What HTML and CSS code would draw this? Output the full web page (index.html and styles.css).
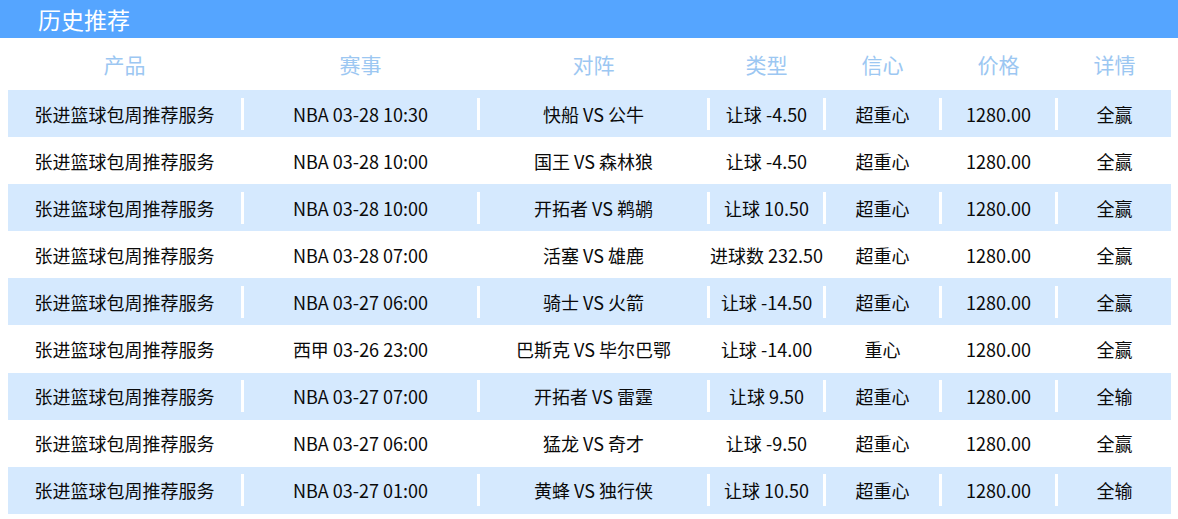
FILE: index.html
```html
<!DOCTYPE html>
<html lang="zh-CN">
<head>
<meta charset="utf-8">
<title>历史推荐</title>
<link rel="stylesheet" href="styles.css">
</head>
<body>
<div class="panel">
  <div class="title-bar"><h2 class="title">历史推荐</h2></div>
  <div class="table">
    <div class="head">
      <span class="c1">产品</span><span class="c2">赛事</span><span class="c3">对阵</span><span class="c4">类型</span><span class="c5">信心</span><span class="c6">价格</span><span class="c7">详情</span>
    </div>
    <ul class="rows">
      <li class="row"><span class="c1">张进篮球包周推荐服务</span><span class="c2">NBA 03-28 10:30</span><span class="c3">快船 VS 公牛</span><span class="c4">让球 -4.50</span><span class="c5">超重心</span><span class="c6">1280.00</span><span class="c7">全赢</span></li>
      <li class="row"><span class="c1">张进篮球包周推荐服务</span><span class="c2">NBA 03-28 10:00</span><span class="c3">国王 VS 森林狼</span><span class="c4">让球 -4.50</span><span class="c5">超重心</span><span class="c6">1280.00</span><span class="c7">全赢</span></li>
      <li class="row"><span class="c1">张进篮球包周推荐服务</span><span class="c2">NBA 03-28 10:00</span><span class="c3">开拓者 VS 鹈鹕</span><span class="c4">让球 10.50</span><span class="c5">超重心</span><span class="c6">1280.00</span><span class="c7">全赢</span></li>
      <li class="row"><span class="c1">张进篮球包周推荐服务</span><span class="c2">NBA 03-28 07:00</span><span class="c3">活塞 VS 雄鹿</span><span class="c4">进球数 232.50</span><span class="c5">超重心</span><span class="c6">1280.00</span><span class="c7">全赢</span></li>
      <li class="row"><span class="c1">张进篮球包周推荐服务</span><span class="c2">NBA 03-27 06:00</span><span class="c3">骑士 VS 火箭</span><span class="c4">让球 -14.50</span><span class="c5">超重心</span><span class="c6">1280.00</span><span class="c7">全赢</span></li>
      <li class="row"><span class="c1">张进篮球包周推荐服务</span><span class="c2">西甲 03-26 23:00</span><span class="c3">巴斯克 VS 毕尔巴鄂</span><span class="c4">让球 -14.00</span><span class="c5">重心</span><span class="c6">1280.00</span><span class="c7">全赢</span></li>
      <li class="row"><span class="c1">张进篮球包周推荐服务</span><span class="c2">NBA 03-27 07:00</span><span class="c3">开拓者 VS 雷霆</span><span class="c4">让球 9.50</span><span class="c5">超重心</span><span class="c6">1280.00</span><span class="c7">全输</span></li>
      <li class="row"><span class="c1">张进篮球包周推荐服务</span><span class="c2">NBA 03-27 06:00</span><span class="c3">猛龙 VS 奇才</span><span class="c4">让球 -9.50</span><span class="c5">超重心</span><span class="c6">1280.00</span><span class="c7">全赢</span></li>
      <li class="row"><span class="c1">张进篮球包周推荐服务</span><span class="c2">NBA 03-27 01:00</span><span class="c3">黄蜂 VS 独行侠</span><span class="c4">让球 10.50</span><span class="c5">超重心</span><span class="c6">1280.00</span><span class="c7">全输</span></li>
    </ul>
  </div>
</div>
</body>
</html>
```
FILE: styles.css
```css
* { box-sizing: border-box; }
html, body {
  margin: 0;
  padding: 0;
  background: #fff;
  font-family: "Noto Sans CJK SC", "Noto Sans", sans-serif;
  overflow: hidden;
}
.panel { width: 1178px; }
.title-bar {
  height: 38px;
  background: #55a5ff;
  padding-left: 38px;
  display: flex;
  align-items: center;
}
.title {
  margin: 0;
  font-size: 23px;
  font-weight: normal;
  color: #fff;
  line-height: 1;
}
.table { padding-left: 8px; }
.head {
  display: flex;
  align-items: center;
  height: 52px;
  width: 1163px;
  color: #9cc7f2;
  font-size: 21px;
}
.head span {
  text-align: center;
  border-left: 3px solid transparent;
}
.head .c1 { border-left: 0; }
.rows {
  list-style: none;
  margin: 0;
  padding: 0;
}
.row {
  display: flex;
  align-items: center;
  height: 47.1px;
  width: 1163px;
  font-size: 18px;
  color: #0a0a0a;
}
.row:nth-child(odd) { background: #d5e9fe; }
.row span {
  height: 32px;
  line-height: 32px;
  text-align: center;
  white-space: nowrap;
  overflow: hidden;
  border-left: 3px solid #fff;
}
.row .c1 { border-left: 0; }
.c1 { width: 233px; }
.c2 { width: 236px; }
.c3 { width: 230px; }
.c4 { width: 116px; }
.c5 { width: 116px; }
.c6 { width: 116px; }
.c7 { width: 116px; }
```
